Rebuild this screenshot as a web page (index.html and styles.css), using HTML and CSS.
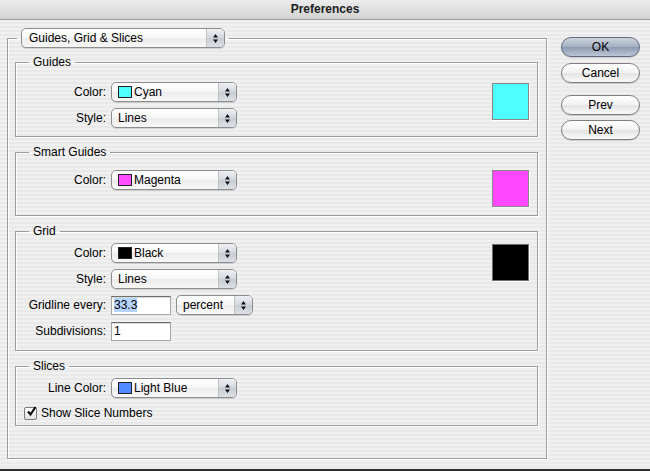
FILE: index.html
```html
<!DOCTYPE html>
<html lang="en">
<head>
    <meta charset="UTF-8">
    <title>Preferences</title>
    <link rel="stylesheet" href="styles.css">
</head>
<body>
    <div class="window">
        <header class="titlebar">Preferences</header>

        <div class="dialog">
            <fieldset class="panel">
                <legend class="panel-legend">
                    <div class="popup popup-main">
                        <span class="popup-label">Guides, Grid &amp; Slices</span>
                        <span class="popup-arrows"><svg width="5" height="9" viewBox="0 0 5 9"><path d="M0 3.5L2.5 0L5 3.5Z M0 5.5L2.5 9L5 5.5Z"/></svg></span>
                    </div>
                </legend>

                <!-- Guides -->
                <fieldset class="group group-guides">
                    <legend>Guides</legend>
                    <div class="group-body">
                        <div class="rows">
                            <div class="row">
                                <label>Color:</label>
                                <div class="popup">
                                    <span class="popup-label"><span class="chip chip-cyan"></span>Cyan</span>
                                    <span class="popup-arrows"><svg width="5" height="9" viewBox="0 0 5 9"><path d="M0 3.5L2.5 0L5 3.5Z M0 5.5L2.5 9L5 5.5Z"/></svg></span>
                                </div>
                            </div>
                            <div class="row">
                                <label>Style:</label>
                                <div class="popup">
                                    <span class="popup-label">Lines</span>
                                    <span class="popup-arrows"><svg width="5" height="9" viewBox="0 0 5 9"><path d="M0 3.5L2.5 0L5 3.5Z M0 5.5L2.5 9L5 5.5Z"/></svg></span>
                                </div>
                            </div>
                        </div>
                        <div class="swatch swatch-cyan"></div>
                    </div>
                </fieldset>

                <!-- Smart Guides -->
                <fieldset class="group group-smart">
                    <legend>Smart Guides</legend>
                    <div class="group-body">
                        <div class="rows">
                            <div class="row">
                                <label>Color:</label>
                                <div class="popup">
                                    <span class="popup-label"><span class="chip chip-magenta"></span>Magenta</span>
                                    <span class="popup-arrows"><svg width="5" height="9" viewBox="0 0 5 9"><path d="M0 3.5L2.5 0L5 3.5Z M0 5.5L2.5 9L5 5.5Z"/></svg></span>
                                </div>
                            </div>
                        </div>
                        <div class="swatch swatch-magenta"></div>
                    </div>
                </fieldset>

                <!-- Grid -->
                <fieldset class="group group-grid">
                    <legend>Grid</legend>
                    <div class="group-body">
                        <div class="rows">
                            <div class="row">
                                <label>Color:</label>
                                <div class="popup">
                                    <span class="popup-label"><span class="chip chip-black"></span>Black</span>
                                    <span class="popup-arrows"><svg width="5" height="9" viewBox="0 0 5 9"><path d="M0 3.5L2.5 0L5 3.5Z M0 5.5L2.5 9L5 5.5Z"/></svg></span>
                                </div>
                            </div>
                            <div class="row">
                                <label>Style:</label>
                                <div class="popup">
                                    <span class="popup-label">Lines</span>
                                    <span class="popup-arrows"><svg width="5" height="9" viewBox="0 0 5 9"><path d="M0 3.5L2.5 0L5 3.5Z M0 5.5L2.5 9L5 5.5Z"/></svg></span>
                                </div>
                            </div>
                            <div class="row">
                                <label>Gridline every:</label>
                                <div class="field"><span class="selected">33.3</span></div>
                                <div class="popup popup-unit">
                                    <span class="popup-label">percent</span>
                                    <span class="popup-arrows"><svg width="5" height="9" viewBox="0 0 5 9"><path d="M0 3.5L2.5 0L5 3.5Z M0 5.5L2.5 9L5 5.5Z"/></svg></span>
                                </div>
                            </div>
                            <div class="row">
                                <label>Subdivisions:</label>
                                <div class="field">1</div>
                            </div>
                        </div>
                        <div class="swatch swatch-black"></div>
                    </div>
                </fieldset>

                <!-- Slices -->
                <fieldset class="group group-slices">
                    <legend>Slices</legend>
                    <div class="rows">
                        <div class="row">
                            <label>Line Color:</label>
                            <div class="popup">
                                <span class="popup-label"><span class="chip chip-blue"></span>Light Blue</span>
                                <span class="popup-arrows"><svg width="5" height="9" viewBox="0 0 5 9"><path d="M0 3.5L2.5 0L5 3.5Z M0 5.5L2.5 9L5 5.5Z"/></svg></span>
                            </div>
                        </div>
                        <div class="check-row">
                            <span class="checkbox"><svg width="11" height="11" viewBox="0 0 11 11"><path d="M2 5.5L4.5 8.5L9.5 1" fill="none" stroke="#111" stroke-width="2.2"/></svg></span>
                            Show Slice Numbers
                        </div>
                    </div>
                </fieldset>
            </fieldset>

            <div class="buttons">
                <button class="btn btn-default">OK</button>
                <button class="btn">Cancel</button>
                <button class="btn btn-prev">Prev</button>
                <button class="btn">Next</button>
            </div>
        </div>
    </div>
</body>
</html>
```

FILE: styles.css
```css
/* General */
body {
    margin: 0;
    background-color: #2b2a26;
    font-family: "Liberation Sans", Arial, sans-serif;
    font-size: 12px;
    color: #000;
}

.window {
    height: 469px;
    overflow: hidden;
    background: repeating-linear-gradient(#f0f0f0 0 2px, #e9e9e9 2px 4px);
}

/* Title bar */
.titlebar {
    height: 19px;
    line-height: 19px;
    text-align: center;
    font-weight: bold;
    color: #1c1c1c;
    background: linear-gradient(#ececec, #d2d2d2);
    border-bottom: 1px solid #9c9c9c;
}

/* Layout */
.dialog {
    display: flex;
    align-items: flex-start;
    padding: 8px 0 0 7px;
    gap: 14px;
}

fieldset {
    margin: 0;
    min-inline-size: 0;
    border: 1px solid #9d9d9d;
    box-shadow: inset 1px 1px 0 #fff, 1px 1px 0 #fff;
}

.panel {
    width: 540px;
    box-sizing: border-box;
    padding: 6px 8px 32px 7px;
}

.panel-legend {
    margin-left: 2px;
    padding: 0 4px;
    line-height: 0;
}

/* Groups */
.group {
    padding: 0 8px 8px 8px;
    margin-top: 7px;
}

.panel-legend + .group {
    margin-top: 0;
}

.group legend {
    margin-left: 5px;
    padding: 0 4px;
    line-height: 16px;
}

.group-guides { padding-top: 12px; }
.group-smart { padding-top: 10px; }
.group-grid { padding-top: 4px; padding-bottom: 9px; }
.group-slices { padding-top: 4px; padding-bottom: 3px; }

.group-body {
    display: flex;
    justify-content: space-between;
    align-items: flex-start;
}

.rows {
    display: flex;
    flex-direction: column;
    gap: 6px;
}

.row {
    display: flex;
    align-items: center;
    gap: 5px;
    height: 20px;
}

.row label {
    width: 82px;
    text-align: right;
    white-space: nowrap;
}

/* Popup menus */
.popup {
    display: flex;
    width: 126px;
    height: 20px;
    box-sizing: border-box;
    border: 1px solid #8d8d8d;
    border-radius: 5px;
    background: linear-gradient(#ffffff, #f6f6f6 50%, #ececec 51%, #f7f7f7);
    box-shadow: 0 1px 0 rgba(0, 0, 0, 0.12);
    overflow: hidden;
}

.popup-main {
    width: 204px;
}

.popup-unit {
    width: 77px;
}

.popup-label {
    flex: 1;
    display: flex;
    align-items: center;
    padding-left: 6px;
    line-height: 18px;
    white-space: nowrap;
}

.popup-main .popup-label {
    padding-left: 7px;
}

.popup-arrows {
    width: 17px;
    display: flex;
    align-items: center;
    justify-content: center;
    border-left: 1px solid #c2c2c2;
    background: linear-gradient(#eef0f3, #d3d7de 50%, #c6cbd3 51%, #dde1e7);
}

.popup-arrows svg {
    fill: #111;
}

.chip {
    width: 14px;
    height: 12px;
    box-sizing: border-box;
    border: 1px solid #222;
    margin-right: 2px;
}

.chip-cyan { background-color: #4dffff; }
.chip-magenta { background-color: #ff4dff; }
.chip-black { background-color: #000; }
.chip-blue { background-color: #4f8cff; }

/* Swatches */
.swatch {
    width: 37px;
    height: 37px;
    box-sizing: border-box;
    border: 1px solid #8a8a8a;
    margin-top: 1px;
    box-shadow: 1px 1px 0 #fff;
}

.swatch-cyan { background-color: #4dffff; }
.swatch-magenta { background-color: #ff48ff; margin-top: 0; }
.swatch-black { background-color: #000; border-color: #6e6e6e; }

/* Text fields */
.field {
    width: 60px;
    height: 19px;
    box-sizing: border-box;
    padding-left: 2px;
    line-height: 17px;
    background-color: #fff;
    border: 1px solid #a5a5a5;
    border-top-color: #6f6f6f;
    box-shadow: inset 0 1px 0 #d8d8d8;
}

.selected {
    background-color: #b5d5ff;
}

/* Checkbox */
.check-row {
    display: flex;
    align-items: center;
    gap: 4px;
    height: 18px;
}

.checkbox {
    width: 13px;
    height: 13px;
    box-sizing: border-box;
    border: 1px solid #7c7c7c;
    border-radius: 2px;
    background: linear-gradient(#ffffff, #e2e2e2);
    display: flex;
    align-items: center;
    justify-content: center;
}

.checkbox svg {
    margin: -3px -2px 0 0;
}

/* Buttons */
.buttons {
    display: flex;
    flex-direction: column;
    width: 79px;
    margin-top: 9px;
}

.btn {
    height: 20px;
    margin-bottom: 6px;
    padding: 0;
    font: inherit;
    color: #000;
    border: 1px solid #7f7f7f;
    border-radius: 10px;
    background: linear-gradient(#ffffff, #f2f2f2 50%, #e3e3e3 51%, #f9f9f9);
    box-shadow: 0 1px 1px rgba(0, 0, 0, 0.15);
}

.btn-default {
    border-color: #5f6b7c;
    background: linear-gradient(#cdd4de, #a3afc0 50%, #8c9ab0 51%, #bcc7d7);
}

.btn-prev {
    margin-top: 6px;
    margin-bottom: 5px;
}
```
